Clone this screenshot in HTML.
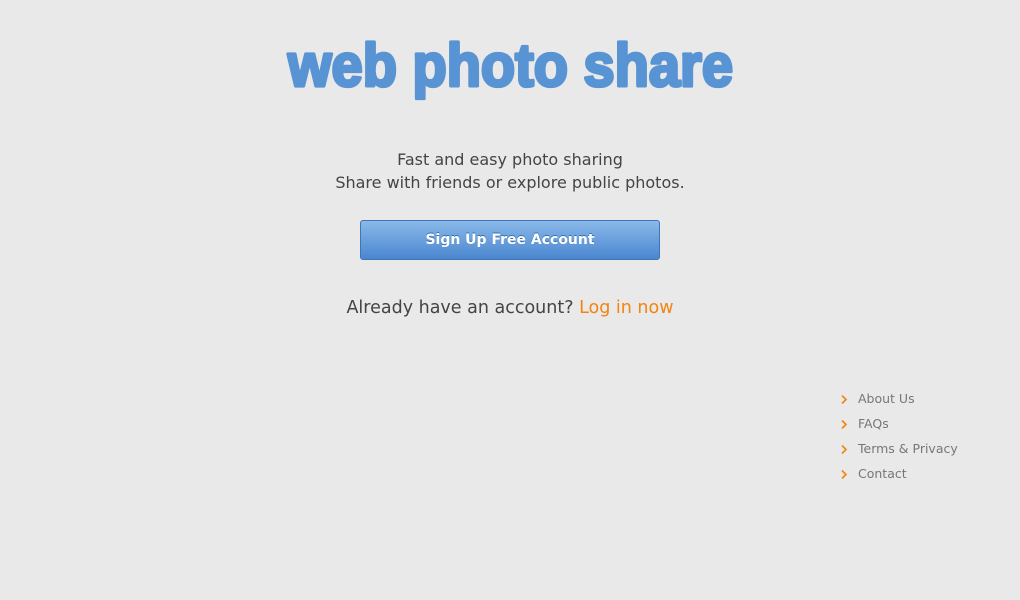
<!DOCTYPE html>
<html><head><style>
body{margin:0;width:1020px;height:600px;background:#e9e9e9;font-family:"DejaVu Sans","Liberation Sans",sans-serif;position:relative;overflow:hidden;color:#444}
.t{position:absolute;left:0;width:1020px;text-align:center;font-size:16px;color:#444}
.btn{position:absolute;left:360px;top:220px;width:298px;height:38px;border:1px solid #3f75b5;border-radius:3px;background:linear-gradient(#8ab9ea,#4a86cf);color:#fff;font-weight:bold;font-size:14px;text-align:center;line-height:38px;text-shadow:0 -1px 0 #3a6eae}
.f{position:absolute;left:858px;font-size:12.5px;color:#777}
.c{position:absolute;left:840px}
</style></head><body>
<svg style="position:absolute;left:0;top:0" width="1020" height="120">
<g transform="scale(1,1.12)">
<text x="288" y="76.8" textLength="445" lengthAdjust="spacingAndGlyphs" font-family="Liberation Sans" font-weight="bold" font-size="54" fill="#5893d3" stroke="#5893d3" stroke-width="3" stroke-linejoin="round">web photo share</text>
</g>
</svg>
<div class="t" style="top:150px">Fast and easy photo sharing</div>
<div class="t" style="top:173px">Share with friends or explore public photos.</div>
<div class="btn">Sign Up Free Account</div>
<div class="t" style="top:298px;font-size:17.5px">Already have an account? <span style="color:#f0850f">Log in now</span></div>
<svg class="c" style="top:395px" width="10" height="90"><g fill="none" stroke="#f0850f" stroke-width="1.6"><path d="M2 0.5l4 4-4 4"/><path d="M2 25.5l4 4-4 4"/><path d="M2 50.5l4 4-4 4"/><path d="M2 75.5l4 4-4 4"/></g></svg>
<div class="f" style="top:391px">About Us</div>
<div class="f" style="top:416px">FAQs</div>
<div class="f" style="top:441px">Terms &amp; Privacy</div>
<div class="f" style="top:466px">Contact</div>
</body></html>
